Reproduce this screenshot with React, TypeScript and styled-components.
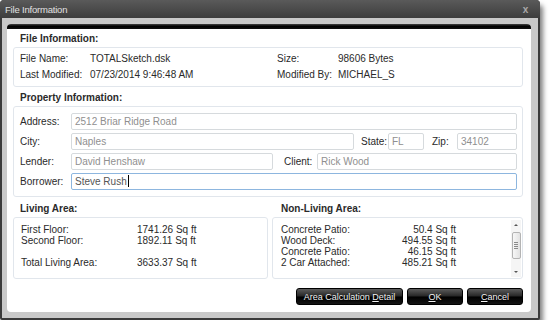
import styled, { createGlobalStyle } from "styled-components";

const GlobalStyle = createGlobalStyle`
  html, body {
    margin: 0;
    background: #fff;
  }
  body {
    font-family: "Liberation Sans", Arial, sans-serif;
    font-size: 10px;
    color: #2a2a2a;
  }
`;

const Window = styled.div`
  width: 540px;
  box-sizing: border-box;
  background: #3a3a3a;
  border-radius: 4px 4px 2px 2px;
  padding: 0 2px 2px;
  box-shadow: 3px 5px 5px rgba(0, 0, 0, 0.5);
`;

const TitleBar = styled.div`
  height: 18px;
  margin: 0 -2px;
  padding: 0 12px 0 5px;
  display: flex;
  align-items: center;
  justify-content: space-between;
  background: linear-gradient(#5a5a5a, #3d3d3d);
  border-radius: 4px 4px 0 0;
  color: #e0e0e0;
  font-size: 9.5px;
  letter-spacing: -0.2px;
`;

const Close = styled.span`
  color: #a9a9a9;
  font-weight: bold;
  font-size: 10px;
`;

const Frame = styled.div`
  background: #c9c9c9;
  padding: 6px 7px 6px 5px;
`;

const Panel = styled.div`
  background: #fff;
  border-radius: 4px;
  overflow: hidden;
  padding: 0 8px 7px 6px;
`;

const TopStripe = styled.div`
  height: 5px;
  margin: 0 -8px 0 -6px;
  background: linear-gradient(#444, #000 45%, #111);
`;

const Heading = styled.div<{ $top?: number; $indent?: number }>`
  font-weight: bold;
  line-height: 12px;
  padding: ${(p) => p.$top ?? 5}px 0 2px ${(p) => p.$indent ?? 7}px;
`;

const Group = styled.div`
  border: 1px solid #e1e6ec;
  border-radius: 3px;
`;

const InfoGrid = styled(Group)`
  display: grid;
  grid-template-columns: 70px 187px 61px 1fr;
  grid-auto-rows: 16px;
  align-items: center;
  padding: 2px 6px 4px 6px;
`;

const PropGroup = styled(Group)`
  display: flex;
  flex-direction: column;
  gap: 3px;
  padding: 6px 5px 6px 6px;
`;

const FieldRow = styled.div`
  display: flex;
  align-items: center;
  height: 17px;
`;

const Label = styled.span<{ $w?: number; $gap?: number }>`
  flex: none;
  width: ${(p) => (p.$w ? `${p.$w}px` : "auto")};
  margin-left: ${(p) => p.$gap ?? 0}px;
  color: #2a2a2a;
`;

const Field = styled.div<{ $w?: number; $focus?: boolean }>`
  box-sizing: border-box;
  height: 17px;
  flex: ${(p) => (p.$w ? "none" : "1")};
  width: ${(p) => (p.$w ? `${p.$w}px` : "auto")};
  border: 1px solid ${(p) => (p.$focus ? "#8db6df" : "#d6dadd")};
  border-radius: 2px;
  padding: 0 3px;
  line-height: 15px;
  color: ${(p) => (p.$focus ? "#555" : "#8f8f8f")};
  white-space: nowrap;
  overflow: hidden;
`;

const Caret = styled.span`
  display: inline-block;
  width: 1px;
  height: 12px;
  margin-left: 1px;
  vertical-align: -2px;
  background: #000;
`;

const AreaColumns = styled.div`
  display: grid;
  grid-template-columns: 255px 1fr;
  column-gap: 4px;
`;

const AreaBox = styled(Group)`
  height: 62px;
  box-sizing: border-box;
  display: flex;
`;

const AreaList = styled.div<{ $pad: number }>`
  flex: 1;
  padding: 6px 0 0 ${(p) => p.$pad}px;
  line-height: 11px;
`;

const AreaRow = styled.div`
  display: flex;
  height: 11px;
`;

const AreaName = styled.span<{ $w: number }>`
  width: ${(p) => p.$w}px;
  flex: none;
`;

const AreaValue = styled.span<{ $right?: boolean }>`
  width: 65px;
  flex: none;
  text-align: ${(p) => (p.$right ? "right" : "left")};
`;

const ScrollBar = styled.div`
  width: 10px;
  margin: 2px 1px 1px 0;
  display: flex;
  flex-direction: column;
  align-items: center;
  background: #f5f5f5;
`;

const Arrow = styled.div<{ $down?: boolean }>`
  width: 0;
  height: 0;
  margin: ${(p) => (p.$down ? "auto 0 4px" : "4px 0 0")};
  border-left: 2px solid transparent;
  border-right: 2px solid transparent;
  ${(p) => (p.$down ? "border-top: 2px solid #555;" : "border-bottom: 2px solid #555;")}
`;

const Thumb = styled.div`
  box-sizing: border-box;
  width: 9px;
  height: 27px;
  margin-top: 6px;
  border: 1px solid #b3b3b3;
  border-radius: 2px;
  background: linear-gradient(90deg, #f7f7f7, #e2e2e2);
  display: flex;
  align-items: center;
  justify-content: center;
`;

const Grip = styled.div`
  width: 4px;
  height: 7px;
  background: repeating-linear-gradient(#8a8a8a 0 1px, transparent 1px 2px);
`;

const Buttons = styled.div`
  display: flex;
  justify-content: flex-end;
  gap: 4px;
  margin-top: 9px;
`;

const Button = styled.button<{ $w: number }>`
  width: ${(p) => p.$w}px;
  height: 17px;
  padding: 0;
  border: 1px solid #000;
  border-radius: 3px;
  background: linear-gradient(#5c5c5c, #262626 48%, #000 52%, #141414);
  color: #f2f2f2;
  font-family: "Liberation Sans", Arial, sans-serif;
  font-size: 9px;
  text-shadow: 0 1px 1px #000;
  cursor: pointer;
`;

const living = [
  ["First Floor:", "1741.26 Sq ft"],
  ["Second Floor:", "1892.11 Sq ft"],
  ["", ""],
  ["Total Living Area:", "3633.37 Sq ft"],
];

const nonLiving = [
  ["Concrete Patio:", "50.4 Sq ft"],
  ["Wood Deck:", "494.55 Sq ft"],
  ["Concrete Patio:", "46.15 Sq ft"],
  ["2 Car Attached:", "485.21 Sq ft"],
];

export default function App() {
  return (
    <>
      <GlobalStyle />
      <Window>
        <TitleBar>
          <span>File Information</span>
          <Close>x</Close>
        </TitleBar>
        <Frame>
          <Panel>
            <TopStripe />
            <Heading $top={4}>File Information:</Heading>
            <InfoGrid>
              <span>File Name:</span>
              <span>TOTALSketch.dsk</span>
              <span>Size:</span>
              <span>98606 Bytes</span>
              <span>Last Modified:</span>
              <span>07/23/2014 9:46:48 AM</span>
              <span>Modified By:</span>
              <span>MICHAEL_S</span>
            </InfoGrid>

            <Heading>Property Information:</Heading>
            <PropGroup>
              <FieldRow>
                <Label $w={51}>Address:</Label>
                <Field>2512 Briar Ridge Road</Field>
              </FieldRow>
              <FieldRow>
                <Label $w={51}>City:</Label>
                <Field $w={283}>Naples</Field>
                <Label $w={27} $gap={7}>State:</Label>
                <Field $w={36}>FL</Field>
                <Label $w={25} $gap={8}>Zip:</Label>
                <Field>34102</Field>
              </FieldRow>
              <FieldRow>
                <Label $w={51}>Lender:</Label>
                <Field $w={202}>David Henshaw</Field>
                <Label $w={33} $gap={11}>Client:</Label>
                <Field>Rick Wood</Field>
              </FieldRow>
              <FieldRow>
                <Label $w={51}>Borrower:</Label>
                <Field $focus>
                  Steve Rush
                  <Caret />
                </Field>
              </FieldRow>
            </PropGroup>

            <AreaColumns>
              <div>
                <Heading $top={6}>Living Area:</Heading>
                <AreaBox>
                  <AreaList $pad={7}>
                    {living.map(([name, value], i) => (
                      <AreaRow key={i}>
                        <AreaName $w={116}>{name}</AreaName>
                        <AreaValue>{value}</AreaValue>
                      </AreaRow>
                    ))}
                  </AreaList>
                </AreaBox>
              </div>
              <div>
                <Heading $top={6} $indent={9}>
                  Non-Living Area:
                </Heading>
                <AreaBox>
                  <AreaList $pad={8}>
                    {nonLiving.map(([name, value], i) => (
                      <AreaRow key={i}>
                        <AreaName $w={110}>{name}</AreaName>
                        <AreaValue $right>{value}</AreaValue>
                      </AreaRow>
                    ))}
                  </AreaList>
                  <ScrollBar>
                    <Arrow />
                    <Thumb>
                      <Grip />
                    </Thumb>
                    <Arrow $down />
                  </ScrollBar>
                </AreaBox>
              </div>
            </AreaColumns>

            <Buttons>
              <Button $w={107}>
                Area Calculation <u>D</u>etail
              </Button>
              <Button $w={56}>
                <u>O</u>K
              </Button>
              <Button $w={56}>
                <u>C</u>ancel
              </Button>
            </Buttons>
          </Panel>
        </Frame>
      </Window>
    </>
  );
}
